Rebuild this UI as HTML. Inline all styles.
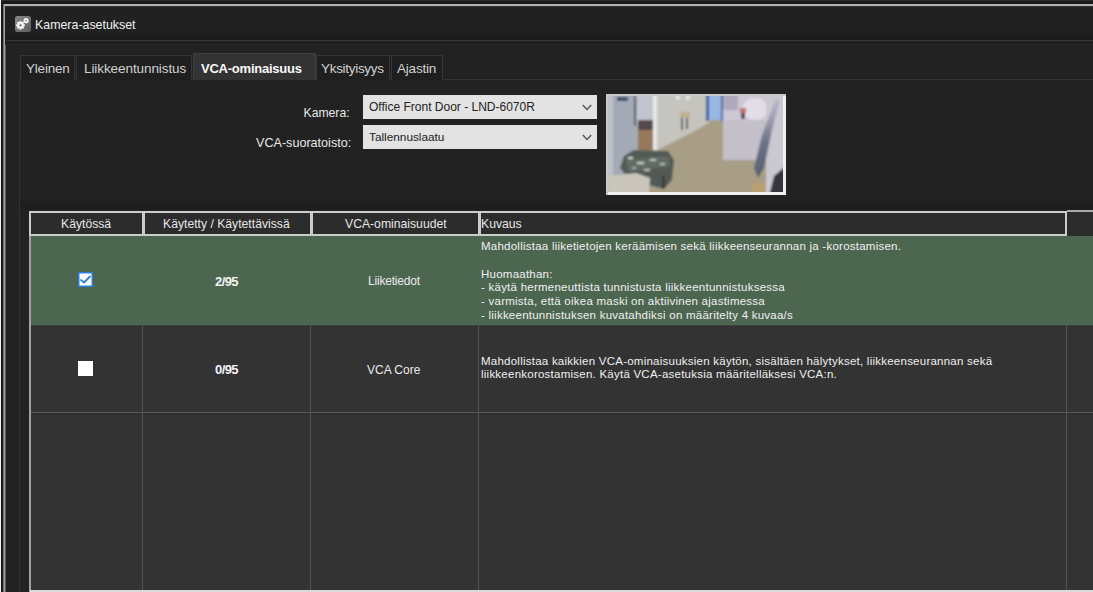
<!DOCTYPE html>
<html><head><meta charset="utf-8">
<style>
*{margin:0;padding:0;box-sizing:border-box}
html,body{width:1093px;height:592px;overflow:hidden;background:#222;font-family:"Liberation Sans",sans-serif}
.a{position:absolute}
.t{position:absolute;white-space:pre;line-height:1}
</style></head><body>
<!-- outer frame -->
<div class="a" style="left:0;top:0;width:1093px;height:1px;background:#2e2e2e"></div>
<div class="a" style="left:0;top:1px;width:1093px;height:3px;background:#1a1a1a"></div>
<div class="a" style="left:0;top:0;width:1px;height:592px;background:#f2f2f2"></div>
<div class="a" style="left:1px;top:1px;width:2px;height:591px;background:#1a1a1a"></div>
<div class="a" style="left:3px;top:4px;width:1090px;height:2px;background:#b4b4b4"></div>
<div class="a" style="left:3px;top:4px;width:1px;height:588px;background:#707070"></div><div class="a" style="left:4px;top:4px;width:1px;height:588px;background:#a0a0a0"></div><div class="a" style="left:5px;top:6px;width:1px;height:586px;background:#606060"></div>
<div class="a" style="left:5px;top:6px;width:1088px;height:1px;background:#303030"></div>
<!-- title bar -->
<div class="a" style="left:5px;top:7px;width:1088px;height:26px;background:#212121"></div>
<div class="a" style="left:5px;top:33px;width:1088px;height:7px;background:#1d1d1d"></div>
<div class="a" style="left:5px;top:40px;width:1088px;height:1px;background:#343434"></div>
<div class="a" style="left:5px;top:41px;width:1088px;height:3px;background:#1f1f1f"></div>
<div class="a" style="left:5px;top:44px;width:1088px;height:1px;background:#272727"></div>
<!-- icon -->
<svg class="a" style="left:15px;top:16px" width="16" height="16" viewBox="0 0 16 16">
<defs><linearGradient id="ig" x1="0" y1="0" x2="1" y2="1"><stop offset="0" stop-color="#8a8a8a"/><stop offset="1" stop-color="#5a5a5a"/></linearGradient></defs>
<rect x="0" y="0" width="16" height="16" rx="2.5" fill="url(#ig)"/>
<g fill="#f4f4f4">
<circle cx="5.5" cy="9.3" r="3.4"/>
<g transform="translate(5.5 9.3)">
<rect x="-0.9" y="-4.4" width="1.8" height="8.8"/>
<rect x="-4.4" y="-0.9" width="8.8" height="1.8"/>
<rect x="-0.9" y="-4.4" width="1.8" height="8.8" transform="rotate(45)"/>
<rect x="-0.9" y="-4.4" width="1.8" height="8.8" transform="rotate(-45)"/>
</g>
<circle cx="11.1" cy="4.7" r="2.6"/>
</g>
<circle cx="5.5" cy="9.3" r="1.1" fill="#5a5a5a"/>
<circle cx="11.1" cy="4.7" r="0.8" fill="#777"/>
</svg>
<div class="t" style="left:35px;top:18.5px;font-size:12.4px;color:#f2f2f2">Kamera-asetukset</div>

<!-- tabs -->
<div class="a" style="left:19px;top:79px;width:1074px;height:1px;background:#343434"></div>
<div class="a" style="left:19px;top:80px;width:1px;height:512px;background:#303030"></div>

<div class="a" style="left:20px;top:55px;width:55px;height:25px;border:1px solid #353535;border-bottom:none;background:#1f1f1f"></div>
<div class="t" style="left:26px;top:62.2px;font-size:13.5px;letter-spacing:-0.2px;color:#d2d2d2">Yleinen</div>
<div class="a" style="left:76px;top:55px;width:116px;height:25px;border:1px solid #353535;border-bottom:none;background:#1f1f1f"></div>
<div class="t" style="left:84px;top:62.2px;font-size:13.5px;letter-spacing:-0.08px;color:#d2d2d2">Liikkeentunnistus</div>
<div class="a" style="left:193px;top:53px;width:123px;height:27px;border:1px solid #3e3e3e;border-bottom:none;background:#333"></div>
<div class="t" style="left:201px;top:62px;font-size:13px;letter-spacing:-0.23px;font-weight:bold;color:#fafafa">VCA-ominaisuus</div>
<div class="a" style="left:316px;top:55px;width:74px;height:25px;border:1px solid #353535;border-bottom:none;background:#1f1f1f"></div>
<div class="t" style="left:321px;top:62.2px;font-size:13.5px;letter-spacing:-0.3px;color:#d2d2d2">Yksityisyys</div>
<div class="a" style="left:391px;top:55px;width:52px;height:25px;border:1px solid #353535;border-bottom:none;background:#1f1f1f"></div>
<div class="t" style="left:397px;top:62.2px;font-size:13.5px;letter-spacing:-0.2px;color:#d2d2d2">Ajastin</div>

<!-- form -->
<div class="t" style="left:303.5px;top:106.8px;font-size:12.2px;color:#e8e8e8">Kamera:</div>
<div class="t" style="left:256px;top:137px;font-size:12.6px;color:#e8e8e8">VCA-suoratoisto:</div>
<div class="a" style="left:363px;top:94.5px;width:234px;height:24.3px;background:#e3e3e3"></div>
<div class="t" style="left:369px;top:101px;font-size:12px;color:#222">Office Front Door - LND-6070R</div>
<svg class="a" style="left:582px;top:104px" width="10" height="7" viewBox="0 0 10 7"><path d="M0.8 1 L5 5.4 L9.2 1" fill="none" stroke="#555" stroke-width="1.4"/></svg>
<div class="a" style="left:363px;top:124.6px;width:234px;height:24.3px;background:#e3e3e3"></div>
<div class="t" style="left:369px;top:132px;font-size:11.8px;color:#222">Tallennuslaatu</div>
<svg class="a" style="left:582px;top:134px" width="10" height="7" viewBox="0 0 10 7"><path d="M0.8 1 L5 5.4 L9.2 1" fill="none" stroke="#555" stroke-width="1.4"/></svg>

<!-- camera image -->
<div class="a" style="left:606px;top:94px;width:180px;height:101px;background:#c8c8c8"></div>
<div class="a" style="left:608px;top:192px;width:178px;height:3px;background:#f0f0f0"></div>
<div class="a" style="left:783px;top:96px;width:3px;height:99px;background:#f0f0f0"></div>
<svg class="a" style="left:608px;top:96px" width="175" height="96" viewBox="608 96 175 96">
<defs><filter id="bl" x="-5%" y="-5%" width="110%" height="110%"><feGaussianBlur stdDeviation="1.2"/></filter></defs>
<rect x="608" y="96" width="175" height="96" fill="#a89e86"/>
<g filter="url(#bl)">
<!-- floor -->
<rect x="600" y="90" width="200" height="110" fill="#a89e86"/>
<!-- back hallway walls -->
<polygon points="655,90 710,90 710,122 700,128 656,151" fill="#c6c4be"/>
<rect x="676" y="96" width="4" height="3" fill="#eeeeea"/>
<rect x="686" y="96" width="4" height="3" fill="#eeeeea"/>
<rect x="680" y="112" width="10" height="6" fill="#c0b090"/>
<rect x="681" y="118" width="2" height="12" fill="#4e5860"/>
<rect x="686" y="118" width="2" height="11" fill="#4e5860"/>
<!-- blue door -->
<rect x="706" y="90" width="3" height="31" fill="#3a58a0"/>
<rect x="709" y="90" width="12" height="30" fill="#98b8e4"/>
<rect x="721" y="90" width="3" height="31" fill="#4a64a4"/>
<!-- right wall -->
<rect x="723" y="90" width="44" height="70" fill="#c4c0ca"/>
<rect x="723" y="90" width="44" height="30" fill="#ccc8d4"/><rect x="723" y="92" width="15" height="18" fill="#aeaabb"/>
<ellipse cx="755" cy="109" rx="13" ry="11" fill="#e2dee8"/>
<rect x="740" y="108" width="6" height="5" fill="#c07070"/>
<rect x="741" y="113" width="4" height="6" fill="#504848"/>
<!-- right strip -->
<rect x="766" y="90" width="20" height="110" fill="#cac8d0"/>
<linearGradient id="dg" x1="0" y1="0" x2="0" y2="1"><stop offset="0" stop-color="#bcbccc"/><stop offset="0.3" stop-color="#9a9aae"/><stop offset="0.55" stop-color="#6c7286"/><stop offset="1" stop-color="#566070"/></linearGradient><polygon points="776,98 780,100 772,130 764,168 758,178 754,168 762,135" fill="url(#dg)"/>
<polygon points="786,166 786,200 768,200 774,176" fill="#34353b"/>
<rect x="752" y="183" width="14" height="10" fill="#baa070"/>
<!-- left wall -->
<polygon points="600,90 638,90 638,178 614,196 600,196" fill="#a4aab6"/>
<rect x="600" y="90" width="13" height="106" fill="#bec2c8"/>
<rect x="617" y="97" width="11" height="4" fill="#3e4c6c"/>
<rect x="634" y="96" width="2" height="30" fill="#565a64"/>
<!-- doorway -->
<rect x="637" y="90" width="18" height="32" fill="#c2c4ce"/>
<rect x="638" y="120" width="15" height="11" fill="#54484a"/>
<rect x="638" y="130" width="15" height="20" fill="#98785a"/>
<rect x="653" y="90" width="4" height="60" fill="#e8e8e8"/>
<!-- foosball -->
<polygon points="624,156 634,150 668,151 674,160 672,180 664,189 652,186 630,180 620,168" fill="#535a54"/>
<polygon points="626,160 668,156 670,166 628,172" fill="#626a64"/>
<rect x="628" y="157" width="5" height="2" fill="#d0d8d0"/>
<rect x="637" y="162" width="7" height="2" fill="#c8d0c8"/>
<rect x="650" y="159" width="6" height="2" fill="#c0c8c0"/>
<rect x="660" y="163" width="5" height="2" fill="#b8c0b8"/>
<rect x="644" y="169" width="6" height="2" fill="#b8c0b8"/>
<rect x="632" y="167" width="4" height="2" fill="#a8b0a8"/>
<rect x="662" y="176" width="3" height="13" fill="#3a3c38"/>
<!-- sofa -->
<polygon points="609,176 636,173 650,178 649,196 609,196" fill="#cac6bc"/>
</g>
</svg>

<!-- table -->
<div class="a" style="left:20px;top:201px;width:1073px;height:9px;background:#1e1e1e"></div>
<div class="a" style="left:29px;top:236px;width:2px;height:356px;background:#a0a0a0"></div>
<div class="a" style="left:31px;top:236px;width:1062px;height:356px;background:#333"></div>
<div class="a" style="left:31px;top:236px;width:1062px;height:89px;background:#4d6650"></div>
<div class="a" style="left:30px;top:590px;width:1063px;height:2px;background:#dcdcdc"></div>
<!-- header cells -->
<div class="a" style="left:29px;top:211px;width:115px;height:25px;border:2px solid #cbcbcb;background:#2c2c2c"></div>
<div class="a" style="left:143px;top:211px;width:169px;height:25px;border:2px solid #cbcbcb;background:#2c2c2c"></div>
<div class="a" style="left:311px;top:211px;width:169px;height:25px;border:2px solid #cbcbcb;background:#2c2c2c"></div>
<div class="a" style="left:479px;top:211px;width:588px;height:25px;border:2px solid #cbcbcb;background:#2c2c2c"></div>
<div class="a" style="left:1067px;top:210px;width:26px;height:1.5px;background:#a8a8a8"></div>
<div class="a" style="left:1067px;top:211.5px;width:26px;height:24.5px;background:#2c2c2c"></div>
<div class="t" style="left:61px;top:218px;font-size:12.2px;color:#e6e6e6">Käytössä</div>
<div class="t" style="left:163px;top:218px;font-size:12.2px;color:#e6e6e6">Käytetty / Käytettävissä</div>
<div class="t" style="left:345px;top:218px;font-size:12.2px;color:#e6e6e6">VCA-ominaisuudet</div>
<div class="t" style="left:481px;top:218px;font-size:12.2px;color:#e6e6e6">Kuvaus</div>

<!-- row1 -->
<svg class="a" style="left:78px;top:272px" width="15" height="15" viewBox="0 0 15 15">
<rect x="0.75" y="0.75" width="13.5" height="13.5" fill="#fff" stroke="#2a7ee0" stroke-width="1.5"/>
<path d="M3 8 L6 10.5 L12 4.5" fill="none" stroke="#2a7ee0" stroke-width="1.8" stroke-linecap="round" stroke-linejoin="round"/>
</svg>
<div class="t" style="left:215px;top:275.1px;font-size:13px;letter-spacing:-0.6px;font-weight:bold;color:#f4f4f4">2/95</div>
<div class="t" style="left:368px;top:275.3px;font-size:12px;letter-spacing:-0.2px;color:#eaeaea">Liiketiedot</div>
<div class="a" style="left:481px;top:240.3px;font-size:11.5px;letter-spacing:0.24px;line-height:13.7px;color:#f0f0f0;white-space:pre">Mahdollistaa liiketietojen keräämisen sekä liikkeenseurannan ja -korostamisen.

Huomaathan:
- käytä hermeneuttista tunnistusta liikkeentunnistuksessa
- varmista, että oikea maski on aktiivinen ajastimessa
- liikkeentunnistuksen kuvatahdiksi on määritelty 4 kuvaa/s</div>

<!-- row2 -->
<div class="a" style="left:31px;top:325px;width:1062px;height:1px;background:#3a3f3a"></div>
<div class="a" style="left:31px;top:412px;width:1062px;height:1px;background:#575b57"></div><div class="a" style="left:31px;top:413px;width:1062px;height:2px;background:#2f312f"></div>
<div class="a" style="left:142px;top:325px;width:1px;height:265px;background:#4b5852"></div>
<div class="a" style="left:310px;top:325px;width:1px;height:265px;background:#4b5852"></div>
<div class="a" style="left:478px;top:325px;width:1px;height:265px;background:#4b5852"></div>
<div class="a" style="left:1066px;top:325px;width:1px;height:265px;background:#4b5852"></div>
<div class="a" style="left:78px;top:361px;width:15px;height:15px;background:#fff"></div>
<div class="t" style="left:215px;top:363.1px;font-size:13px;letter-spacing:-0.6px;font-weight:bold;color:#f4f4f4">0/95</div>
<div class="t" style="left:367px;top:363.5px;font-size:12px;color:#eaeaea">VCA Core</div>
<div class="a" style="left:481px;top:354.6px;font-size:11.5px;letter-spacing:0.24px;line-height:13.7px;color:#f0f0f0;white-space:pre">Mahdollistaa kaikkien VCA-ominaisuuksien käytön, sisältäen hälytykset, liikkeenseurannan sekä
liikkeenkorostamisen. Käytä VCA-asetuksia määritelläksesi VCA:n.</div>
</body></html>
